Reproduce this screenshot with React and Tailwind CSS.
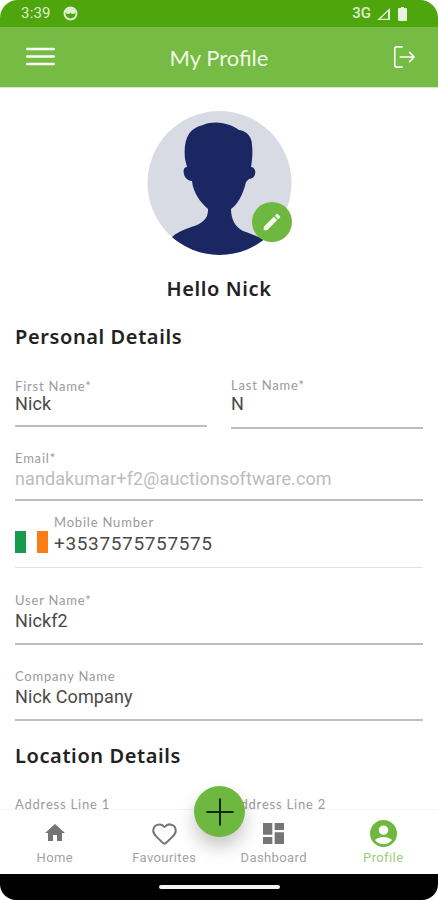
import React from "react";
import { Plus, Heart } from "lucide-react";

const heading = "font-['Noto_Sans',sans-serif] text-[20px] font-semibold leading-[26px] tracking-[0.6px] text-[#222222]";
const label = "font-['Lato',sans-serif] text-[13px] leading-[16px] tracking-[0.8px] text-[#9a9a9a]";
const body = "font-['Roboto',sans-serif]";

const Field = ({ title, value, className = "", valueClass = "", muted = false }) => (
  <div className={`border-b-2 border-[#bdbdbd] ${className}`}>
    <div className={label}>{title}</div>
    <div
      className={`${body} text-[18px] leading-[22px] tracking-[0.1px] ${muted ? "text-[#bcbcbc]" : "text-[#4a4a4a]"} ${valueClass}`}
    >
      {value}
    </div>
  </div>
);

const NavItem = ({ icon, title, active }) => (
  <div className="flex flex-1 flex-col items-center">
    <div className="flex h-[30px] items-center justify-center">{icon}</div>
    <div
      className={`${body} mt-[2px] text-[13px] leading-[16px] tracking-[0.4px] ${active ? "text-[#9ccf79]" : "text-[#a3a3a3]"}`}
    >
      {title}
    </div>
  </div>
);

export default function App() {
  return (
    <div className="relative flex h-[900px] w-[438px] flex-col overflow-hidden bg-white">
      {/* status bar */}
      <div className="flex h-[27px] shrink-0 items-center justify-between rounded-t-[18px] bg-[#4fa50c] pl-[21px] pr-[29px] text-[#dcefd0]">
        <div className="flex items-center gap-[12px]">
          <span className={`${body} text-[15px] tracking-[0.2px]`}>3:39</span>
          <svg width="15" height="15" viewBox="0 0 15 15">
            <circle cx="7.5" cy="7.5" r="6" fill="none" stroke="#dcefd0" strokeWidth="2" />
            <path d="M2.5 6.5a5 5 0 0 1 10 0 3 3 0 0 1-5 .3 3 3 0 0 1-5-.3z" fill="#dcefd0" />
          </svg>
        </div>
        <div className="flex items-center gap-[5px]">
          <span className={`${body} text-[15px] font-medium`}>3G</span>
          <svg width="15" height="14" viewBox="0 0 15 14">
            <path d="M14 1v12H1z M12 4.5 4.6 11.7H12z" fill="#dcefd0" fillRule="evenodd" />
          </svg>
          <svg width="12" height="16" viewBox="0 0 12 16" className="ml-[1px]">
            <path d="M4 1h3v1h2a1 1 0 0 1 1 1v11a1 1 0 0 1-1 1H2a1 1 0 0 1-1-1V3a1 1 0 0 1 1-1h2z" fill="#e8f4df" />
          </svg>
        </div>
      </div>

      {/* app bar */}
      <div className="flex h-[61px] shrink-0 items-center border-b border-[#d9e8cc] bg-[#76bb43] pl-[26px] pr-[22px]">
        <div className="w-[30px]">
          <svg width="29" height="20" viewBox="0 0 29 20" fill="none" stroke="#ffffff" strokeWidth="2.6" strokeLinecap="round" className="block">
            <path d="M1.3 2h26.4M1.3 9.5h26.4M1.3 17h26.4" />
          </svg>
        </div>
        <div className="flex-1 text-center font-['Lato',sans-serif] text-[22px] text-[#eef7e6]">My Profile</div>
        <div className="flex w-[34px] justify-end">
          <svg width="24" height="24" viewBox="0 0 26 26" fill="none" stroke="#ffffff" strokeWidth="1.7" strokeLinecap="round" strokeLinejoin="round">
            <path d="M11 2H5a2 2 0 0 0-2 2v18a2 2 0 0 0 2 2h6" />
            <path d="M9 13h15M19 8l5 5-5 5" />
          </svg>
        </div>
      </div>

      {/* avatar */}
      <div className="flex shrink-0 flex-col items-center pt-[23px]">
        <div className="relative h-[144px] w-[145px]">
          <svg width="145" height="144" viewBox="0 0 145 144" className="block">
            <defs>
              <clipPath id="avatarClip">
                <circle cx="72.5" cy="72" r="72" />
              </clipPath>
            </defs>
            <circle cx="72.5" cy="72" r="72" fill="#d9dbe4" />
            <g clipPath="url(#avatarClip)" fill="#1b2763">
              <path d="M38 48C36 28 42 17 56 14 C68 9 82 12 92 19 C100 20 105 26 105 34 C106 42 105 50 104 56 C110 56 110 68 102 68 L99 71 C96 84 90 94 84 98 C84 108 88 116 96 120 C108 124 116 128 122 132 C105 150 40 150 25 126 C34 118 44 117 52 113 C60 108 61 104 61 98 C54 92 46 82 45 70 C36 70 34 56 40 56 Z" />
            </g>
          </svg>
          <div className="absolute left-[105px] top-[91px] flex h-[40px] w-[40px] items-center justify-center rounded-full bg-[#6fb83f]">
            <svg width="22" height="22" viewBox="0 0 24 24" fill="#f4f9ef">
              <path d="M3 17.25V21h3.75L17.81 9.94l-3.75-3.75L3 17.25zM20.71 7.04a1 1 0 0 0 0-1.41l-2.34-2.34a1 1 0 0 0-1.41 0l-1.83 1.83 3.75 3.75 1.83-1.83z" />
            </svg>
          </div>
        </div>
        <div className={`${heading} mt-[21px]`}>Hello Nick</div>
      </div>

      {/* form */}
      <div className="min-h-0 flex-1 overflow-hidden px-[15px]">
        <div className={`${heading} mt-[22px]`}>Personal Details</div>

        <div className="mt-[28px] grid grid-cols-2 items-start gap-x-[24px]">
          <Field title="First Name*" value="Nick" className="h-[49px]" valueClass="-mt-[1px] text-[16px]" />
          <Field title="Last Name*" value="N" className="-mt-[1px] h-[52px]" />
        </div>
        <Field title="Email*" value="nandakumar+f2@auctionsoftware.com" muted className="mt-[21px] h-[51px]" valueClass="mt-[2px]" />

        <div className="mt-[13px] flex h-[54px] border-b border-[#e2e2e2]">
          <div className="mt-[17px] flex h-[22px] w-[39px] shrink-0">
            <div className="w-[11px] bg-[#169b4e]" />
            <div className="w-[11px] bg-white" />
            <div className="w-[11px] bg-[#f97c16]" />
          </div>
          <div>
            <div className={label}>Mobile Number</div>
            <div className={`${body} mt-[2px] text-[19px] leading-[24px] tracking-[0.65px] text-[#4a4a4a]`}>+3537575757575</div>
          </div>
        </div>

        <Field title="User Name*" value="Nickf2" className="mt-[24px] h-[53px]" valueClass="mt-[2px]" />
        <Field title="Company Name" value="Nick Company" className="mt-[23px] h-[53px]" valueClass="mt-[2px]" />

        <div className={`${heading} mt-[22px]`}>Location Details</div>
        <div className={`${label} mt-[27px] grid grid-cols-2 gap-x-[24px]`}>
          <div>Address Line 1</div>
          <div>Address Line 2</div>
        </div>
      </div>

      {/* bottom nav */}
      <div className="z-10 flex h-[65px] shrink-0 border-t border-[#f4f4f4] bg-white pt-[8px]">
        <NavItem
          title="Home"
          icon={
            <svg width="24" height="24" viewBox="0 0 24 24" fill="#757575">
              <path d="M10 20v-6h4v6h5v-8h3L12 3 2 12h3v8z" />
            </svg>
          }
        />
        <NavItem title="Favourites" icon={<Heart size={27} strokeWidth={1.8} color="#757575" />} />
        <NavItem
          title="Dashboard"
          icon={
            <svg width="21" height="21" viewBox="3 3 18 18" fill="#757575">
              <path d="M3 13h8V3H3v10zm0 8h8v-6H3v6zm10 0h8V11h-8v10zm0-18v6h8V3h-8z" />
            </svg>
          }
        />
        <NavItem
          active
          title="Profile"
          icon={
            <svg width="27" height="27" viewBox="2 2 20 20" fill="#6fb83f">
              <path
                fillRule="evenodd"
                d="M12 2a10 10 0 1 0 0 20 10 10 0 0 0 0-20zm0 4a3.5 3.5 0 1 1 0 7 3.5 3.5 0 0 1 0-7zm0 14c-2.6 0-4.9-1.2-6.3-3.1C6.9 15.3 10 14.5 12 14.5s5.1.8 6.3 2.4A8 8 0 0 1 12 20z"
              />
            </svg>
          }
        />
      </div>

      {/* gesture bar */}
      <div className="flex h-[26px] shrink-0 items-center justify-center rounded-b-[16px] bg-black">
        <div className="h-[4px] w-[121px] rounded-full bg-[#f2f2f2]" />
      </div>

      {/* fab */}
      <div className="absolute left-[194px] top-[786px] z-20 flex h-[51px] w-[51px] items-center justify-center rounded-full bg-[#6fb83f] shadow-[0_10px_18px_rgba(0,0,0,0.22)]">
        <Plus size={44} strokeWidth={1.1} color="#16260c" />
      </div>
    </div>
  );
}
